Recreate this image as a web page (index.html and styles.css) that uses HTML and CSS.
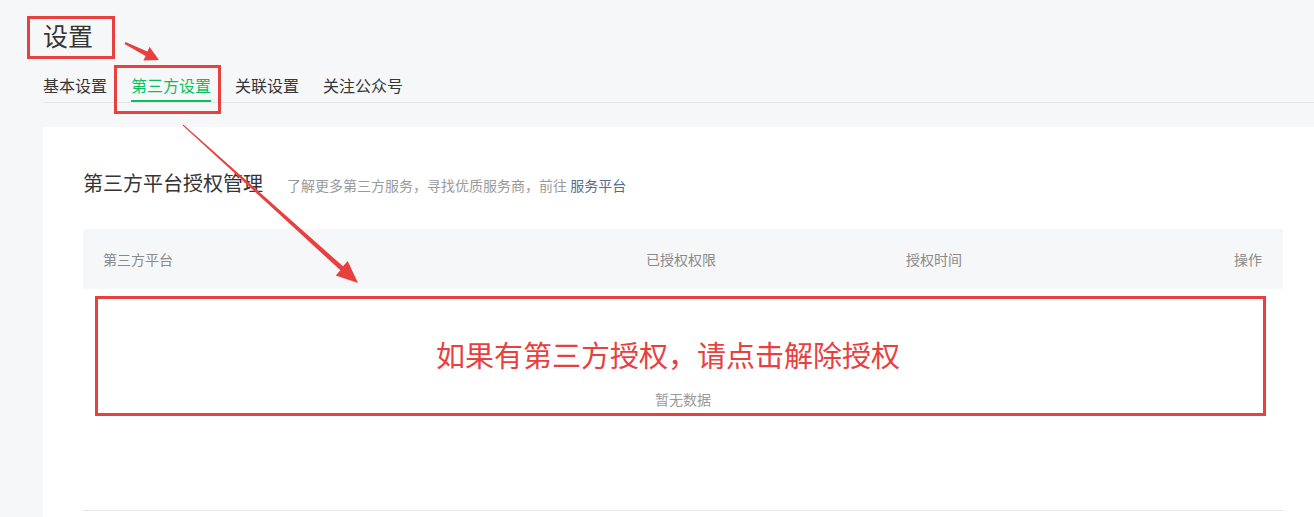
FILE: index.html
```html
<!DOCTYPE html>
<html lang="zh-CN">
<head>
<meta charset="utf-8">
<title>设置</title>
<link rel="stylesheet" href="styles.css">
</head>
<body>
<div class="page">
  <h1 class="page-title">设置</h1>
  <nav class="tabs">
    <a class="tab">基本设置</a>
    <a class="tab active">第三方设置</a>
    <a class="tab">关联设置</a>
    <a class="tab">关注公众号</a>
  </nav>
  <section class="card">
    <div class="section-head">
      <h2 class="section-title">第三方平台授权管理</h2>
      <p class="section-desc">了解更多第三方服务，寻找优质服务商，前往 <a class="link">服务平台</a></p>
    </div>
    <div class="table">
      <div class="thead">
        <span class="col col-platform">第三方平台</span>
        <span class="col col-scope">已授权权限</span>
        <span class="col col-time">授权时间</span>
        <span class="col col-op">操作</span>
      </div>
      <div class="tbody-empty">暂无数据</div>
    </div>
  </section>

  <div class="note-box note-title"></div>
  <div class="note-box note-tab"></div>
  <div class="note-box note-empty"><span class="note-text">如果有第三方授权，请点击解除授权</span></div>
  <svg class="arrows" width="1314" height="517" viewBox="0 0 1314 517">
    <polygon fill="#e8403f" points="124.5,44.0 145.6,56.0 143.4,60.5 159,60 149.6,46.9 147.4,51.4 125.5,42.0"/>
    <polygon fill="#e8403f" points="182.7,125.4 340.4,270.3 335.7,275.5 358,283 347.7,261.1 343.0,266.3 183.3,124.6"/>
  </svg>
</div>
</body>
</html>
```
FILE: styles.css
```css
html, body {
  margin: 0;
  padding: 0;
  overflow: hidden;
}
body {
  background: #f6f7f9;
  font-family: "Noto Sans CJK SC", "Noto Sans", sans-serif;
  color: #353535;
  width: 1314px;
  height: 517px;
}
.page {
  position: relative;
  padding-left: 43px;
  height: 517px;
  overflow: hidden;
}
.page-title {
  margin: 0;
  padding-top: 17px;
  font-size: 25px;
  line-height: 36px;
  font-weight: 400;
  color: #353535;
}
.tabs {
  display: flex;
  gap: 24px;
  margin-top: 21px;
  border-bottom: 1px solid #e4e6e9;
}
.tab {
  font-size: 16px;
  line-height: 22px;
  padding-bottom: 4px;
  border-bottom: 2px solid transparent;
  color: #353535;
}
.tab.active {
  color: #07c160;
  border-bottom-color: #07c160;
}
.card {
  margin-top: 24px;
  width: 1280px;
  box-sizing: border-box;
  background: #fff;
  padding: 42px 40px 0 40px;
  height: 390px;
}
.section-head {
  display: flex;
  align-items: baseline;
}
.section-title {
  margin: 0;
  font-size: 20px;
  line-height: 28px;
  font-weight: 400;
  color: #353535;
}
.section-desc {
  margin: 0 0 0 24px;
  font-size: 14px;
  color: #9a9a9a;
}
.link {
  color: #576b95;
}
.table {
  margin-top: 32px;
}
.thead {
  display: flex;
  align-items: center;
  height: 60px;
  background: #f6f7f9;
  font-size: 14px;
  color: #8a8a8a;
  padding: 0 21px 0 20px;
}
.col-platform { width: 543px; }
.col-scope { width: 260px; }
.col-time { flex: 1; }
.col-op { text-align: right; }
.tbody-empty {
  height: 222px;
  box-sizing: border-box;
  padding-top: 100px;
  text-align: center;
  font-size: 14px;
  line-height: 20px;
  color: #9a9a9a;
  border-bottom: 1px solid #e4e6e9;
}
.note-box {
  position: absolute;
  box-sizing: border-box;
  border: 3px solid #e8403f;
}
.note-title {
  left: 27px;
  top: 16px;
  width: 88px;
  height: 43px;
}
.note-tab {
  left: 114px;
  top: 65px;
  width: 107px;
  height: 49px;
}
.note-empty {
  left: 95px;
  top: 296px;
  width: 1171px;
  height: 120px;
  display: flex;
  justify-content: center;
  padding: 35px 25px 0 0;
}
.note-text {
  font-size: 29px;
  line-height: 40px;
  height: 40px;
  color: #e8403f;
}
.arrows {
  position: absolute;
  left: 0;
  top: 0;
}
```
